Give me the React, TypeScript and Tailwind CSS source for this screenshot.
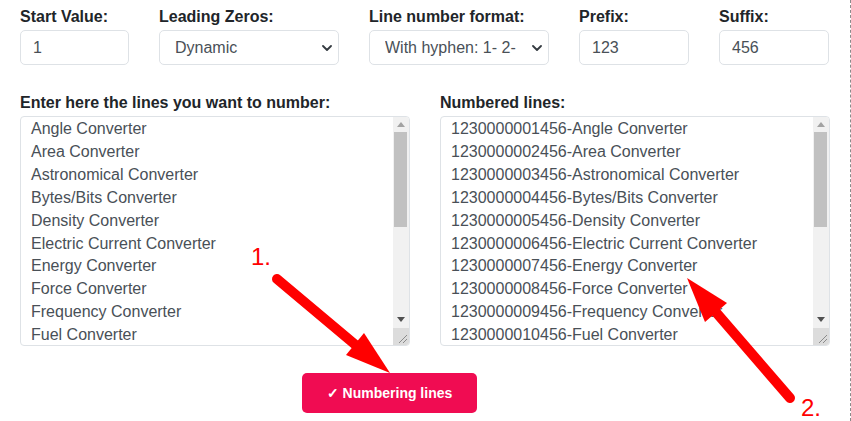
import { useState } from 'react';

const items = [
  'Angle Converter',
  'Area Converter',
  'Astronomical Converter',
  'Bytes/Bits Converter',
  'Density Converter',
  'Electric Current Converter',
  'Energy Converter',
  'Force Converter',
  'Frequency Converter',
  'Fuel Converter',
];

function Label({ children }: { children: React.ReactNode }) {
  return <div className="text-[16px] leading-6 font-bold text-[#212529] mb-[1px] whitespace-nowrap">{children}</div>;
}

function Chevron() {
  return (
    <svg width="10" height="6" viewBox="0 0 10 6" className="shrink-0">
      <polyline points="1,1 5,5 9,1" fill="none" stroke="#343a40" strokeWidth="1.8" strokeLinecap="round" strokeLinejoin="round" />
    </svg>
  );
}

function TextField({ width, value }: { width: string; value: string }) {
  return (
    <div className={`${width} h-[35px] border border-[#dee2e6] rounded-[5px] flex items-center pl-[12px] text-[16px] text-[#495057]`}>
      {value}
    </div>
  );
}

function SelectField({ value }: { value: string }) {
  return (
    <div className="w-[180px] h-[35px] border border-[#dee2e6] rounded-[5px] flex items-center pl-[15px] pr-[6px] text-[16px] text-[#495057]">
      <span className="flex-1 whitespace-nowrap overflow-hidden">{value}</span>
      <Chevron />
    </div>
  );
}

function Scrollbar() {
  return (
    <div className="w-[16px] bg-[#f1f1f1] flex flex-col">
      <div className="h-[15px] flex items-center justify-center">
        <svg width="8" height="5" viewBox="0 0 8 5">
          <polygon points="0,5 4,0 8,5" fill="#a3a3a3" />
        </svg>
      </div>
      <div className="h-[95px] ml-[1px] mr-[2px] bg-[#c1c1c1]" />
      <div className="flex-1" />
      <div className="h-[17px] flex items-center justify-center">
        <svg width="8" height="5" viewBox="0 0 8 5">
          <polygon points="0,0 8,0 4,5" fill="#505050" />
        </svg>
      </div>
      <div className="h-[17px] bg-[#dcdcdc] flex items-end justify-end p-[2px]">
        <svg width="9" height="9" viewBox="0 0 9 9">
          <line x1="1" y1="9" x2="9" y2="1" stroke="#8a8a8a" strokeWidth="1" />
          <line x1="5" y1="9" x2="9" y2="5" stroke="#8a8a8a" strokeWidth="1" />
        </svg>
      </div>
    </div>
  );
}

function LinesBox({ lines }: { lines: string[] }) {
  return (
    <div className="w-[390px] h-[230px] border border-[#dee2e6] rounded-[4px] flex overflow-hidden">
      <div className="flex-1 pl-[10px] pt-[1px] text-[16px] leading-[22.9px] text-[#495057] overflow-hidden whitespace-nowrap">
        {lines.map((l) => (
          <div key={l}>{l}</div>
        ))}
      </div>
      <Scrollbar />
    </div>
  );
}

export default function App() {
  const [prefix] = useState('123');
  const [suffix] = useState('456');
  const numbered = items.map((l, i) => `${prefix}${String(i + 1).padStart(7, '0')}${suffix}-${l}`);

  return (
    <div
      className="relative w-[851px] h-[421px] overflow-hidden bg-white border-r border-dashed border-[#8a8a8a]"
      style={{ fontFamily: '"Liberation Sans", Arial, sans-serif' }}
    >
      <div className="pl-5 pt-[5px]">
        <div className="flex gap-[30px]">
          <div>
            <Label>Start Value:</Label>
            <TextField width="w-[109px]" value="1" />
          </div>
          <div>
            <Label>Leading Zeros:</Label>
            <SelectField value="Dynamic" />
          </div>
          <div>
            <Label>Line number format:</Label>
            <SelectField value="With hyphen: 1- 2-" />
          </div>
          <div>
            <Label>Prefix:</Label>
            <TextField width="w-[110px]" value={prefix} />
          </div>
          <div>
            <Label>Suffix:</Label>
            <TextField width="w-[110px]" value={suffix} />
          </div>
        </div>

        <div className="flex gap-[30px] mt-[26px]">
          <div>
            <Label>Enter here the lines you want to number:</Label>
            <LinesBox lines={items} />
          </div>
          <div>
            <Label>Numbered lines:</Label>
            <LinesBox lines={numbered} />
          </div>
        </div>

        <div className="mt-[27px] ml-[282px]">
          <button className="w-[175px] h-[40px] rounded-[5px] bg-[#f00c52] text-white text-[14px] font-bold">
            ✓ Numbering lines
          </button>
        </div>
      </div>

      <svg className="absolute inset-0 pointer-events-none" width="851" height="421" viewBox="0 0 851 421">
        <text x="251" y="265" fill="#ff0000" fontSize="24" fontFamily='"Liberation Sans", Arial, sans-serif'>1.</text>
        <line x1="277" y1="279" x2="358" y2="347" stroke="#ff0000" strokeWidth="10" strokeLinecap="round" />
        <polygon points="390,373 346,355 364,333" fill="#ff0000" />
        <text x="801" y="416" fill="#ff0000" fontSize="24" fontFamily='"Liberation Sans", Arial, sans-serif'>2.</text>
        <line x1="790" y1="398" x2="714" y2="310" stroke="#ff0000" strokeWidth="10" strokeLinecap="round" />
        <polygon points="687,278 727,303 705,322" fill="#ff0000" />
      </svg>
    </div>
  );
}
